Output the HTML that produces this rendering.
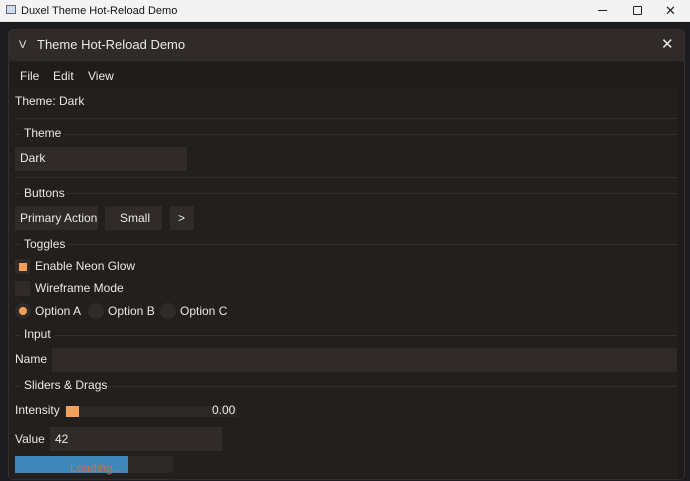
<!DOCTYPE html><html><head><style>
*{margin:0;padding:0;box-sizing:border-box}
body{width:690px;height:481px;background:#1c1b1d;font-family:"Liberation Sans",sans-serif;font-size:12px;color:#ece8e4;position:relative;overflow:hidden}
.a{position:absolute;white-space:nowrap}
.t{line-height:14px;transform:translateY(-7px)}
.f{background:#302b29}
.ln{position:absolute;height:1px;background:#36302d}
</style></head><body>
<div class="a" style="left:0;top:0;width:690px;height:22px;background:#f3f3f3;border-bottom:1px solid #ddd"></div>
<div class="a" style="left:6px;top:5px;width:10px;height:9px;border:1px solid #667;background:#cde"></div>
<div class="a t" style="left:21px;top:11px;color:#111;font-size:11px">Duxel Theme Hot-Reload Demo</div>
<div class="a" style="left:598px;top:10px;width:9px;height:1px;background:#222"></div>
<div class="a" style="left:633px;top:6px;width:9px;height:9px;border:1px solid #222;border-radius:1px"></div>
<div class="a t" style="left:665px;top:11px;color:#222;font-size:13px">✕</div>
<div class="a" style="left:8px;top:29px;width:677px;height:451px;background:#221f1e;border:1px solid #34302e;border-radius:5px;overflow:hidden">
<div class="a" style="left:0;top:0;width:677px;height:31px;background:#302b28"></div>
<div class="a" style="left:0;top:33px;width:677px;height:26px;background:#1f1c1b"></div>
<div class="a" style="left:668px;top:31px;width:9px;height:420px;background:#1e1b1a"></div>
</div>
<div class="a t" style="left:19px;top:45px;font-size:11px">V</div>
<div class="a t" style="left:37px;top:45px;font-size:13px">Theme Hot-Reload Demo</div>
<div class="a t" style="left:661px;top:45px;font-size:15px">✕</div>
<div class="a t" style="left:20px;top:76px">File</div>
<div class="a t" style="left:53px;top:76px">Edit</div>
<div class="a t" style="left:88px;top:76px">View</div>
<div class="a t" style="left:15px;top:101px">Theme: Dark</div>
<div class="ln" style="left:15px;top:118px;width:662px"></div>
<div class="ln" style="left:15px;top:134px;width:5px"></div><div class="ln" style="left:63px;top:134px;width:614px"></div>
<div class="a t" style="left:24px;top:133px">Theme</div>
<div class="a f" style="left:15px;top:147px;width:172px;height:24px"></div>
<div class="a t" style="left:20px;top:158px">Dark</div>
<div class="ln" style="left:15px;top:177px;width:662px"></div>
<div class="ln" style="left:15px;top:193px;width:5px"></div><div class="ln" style="left:67px;top:193px;width:610px"></div>
<div class="a t" style="left:24px;top:193px">Buttons</div>
<div class="a f" style="left:15px;top:206px;width:83px;height:24px"></div><div class="a t" style="left:20px;top:218px">Primary Action</div>
<div class="a f" style="left:105px;top:206px;width:57px;height:24px"></div><div class="a t" style="left:120px;top:218px">Small</div>
<div class="a f" style="left:170px;top:206px;width:24px;height:24px"></div><div class="a t" style="left:178px;top:218px">&gt;</div>
<div class="ln" style="left:15px;top:244px;width:5px"></div><div class="ln" style="left:68px;top:244px;width:609px"></div>
<div class="a t" style="left:24px;top:244px">Toggles</div>
<div class="a f" style="left:15px;top:259px;width:15px;height:15px"></div>
<div class="a" style="left:19px;top:263px;width:8px;height:8px;background:#f5a05a"></div>
<div class="a t" style="left:35px;top:266px">Enable Neon Glow</div>
<div class="a f" style="left:15px;top:281px;width:15px;height:15px"></div>
<div class="a t" style="left:35px;top:288px">Wireframe Mode</div>
<div class="a f" style="left:15px;top:303px;width:16px;height:16px;border-radius:50%"></div>
<div class="a" style="left:19px;top:307px;width:8px;height:8px;border-radius:50%;background:#f5a05a"></div>
<div class="a t" style="left:35px;top:311px">Option A</div>
<div class="a f" style="left:88px;top:303px;width:16px;height:16px;border-radius:50%"></div>
<div class="a t" style="left:108px;top:311px">Option B</div>
<div class="a f" style="left:160px;top:303px;width:16px;height:16px;border-radius:50%"></div>
<div class="a t" style="left:180px;top:311px">Option C</div>
<div class="ln" style="left:15px;top:335px;width:5px"></div><div class="ln" style="left:55px;top:335px;width:622px"></div>
<div class="a t" style="left:24px;top:334px">Input</div>
<div class="a t" style="left:15px;top:359px">Name</div>
<div class="a f" style="left:52px;top:348px;width:625px;height:24px"></div>
<div class="ln" style="left:15px;top:386px;width:5px"></div><div class="ln" style="left:106px;top:386px;width:571px"></div>
<div class="a t" style="left:24px;top:385px">Sliders &amp; Drags</div>
<div class="a t" style="left:15px;top:410px">Intensity</div>
<div class="a" style="left:65px;top:406px;width:172px;height:11px;background:#2c2826"></div>
<div class="a" style="left:66px;top:406px;width:13px;height:11px;background:#f5a05a"></div>
<div class="a t" style="left:212px;top:410px">0.00</div>
<div class="a t" style="left:15px;top:439px">Value</div>
<div class="a f" style="left:50px;top:427px;width:172px;height:24px"></div>
<div class="a t" style="left:55px;top:439px">42</div>
<div class="a" style="left:15px;top:456px;width:158px;height:17px;background:#2c2826"></div>
<div class="a" style="left:15px;top:456px;width:113px;height:17px;background:#3f86b9"></div>
<div class="a t" style="left:70px;top:468px;color:#c8743f">Loading...</div>
</body></html>
